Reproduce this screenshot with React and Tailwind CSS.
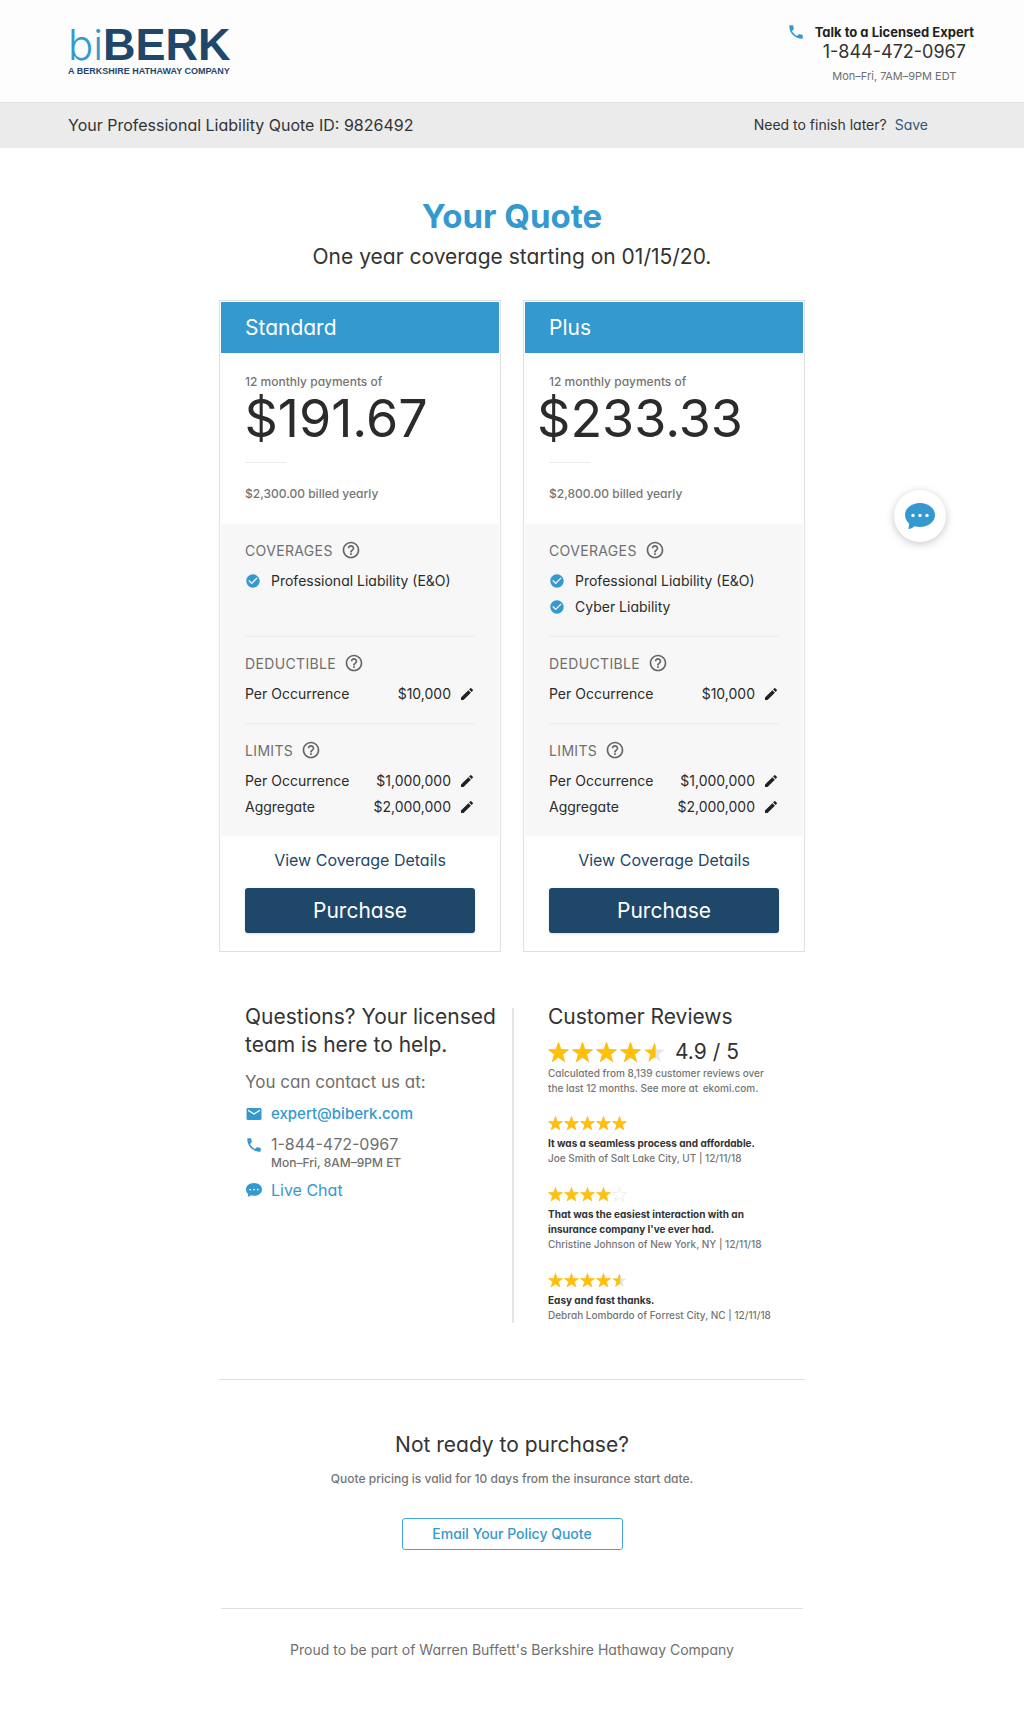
import { MdCheckCircle, MdEdit, MdEmail, MdHelpOutline, MdPhone } from 'react-icons/md'

const plans = [
  {
    name: 'Standard',
    monthly: '$191.67',
    yearly: '$2,300.00',
    coverages: ['Professional Liability (E&O)'],
  },
  {
    name: 'Plus',
    monthly: '$233.33',
    yearly: '$2,800.00',
    coverages: ['Professional Liability (E&O)', 'Cyber Liability'],
  },
]

const reviews = [
  { rating: 5, text: 'It was a seamless process and affordable.', author: 'Joe Smith of Salt Lake City, UT | 12/11/18' },
  { rating: 4, text: "That was the easiest interaction with an insurance company I've ever had.", author: 'Christine Johnson of New York, NY | 12/11/18' },
  { rating: 4.5, text: 'Easy and fast thanks.', author: 'Debrah Lombardo of Forrest City, NC | 12/11/18' },
]

const STAR = 'M10 0.5 12.4 7.2 19.5 7.4 13.9 11.8 15.9 18.7 10 14.6 4.1 18.7 6.1 11.8 0.5 7.4 7.6 7.2Z'

function Star({ fill, className }) {
  return (
    <svg viewBox="0 0 20 20" className={className} aria-hidden="true">
      {fill === 0 && <path d={STAR} fill="#fff" stroke="#e3e3e3" strokeWidth="0.8" />}
      {fill === 0.5 && (
        <>
          <path d={STAR} fill="#e6e6e6" />
          <path d="M11 3.3V15.3L10 14.6 4.1 18.7 6.1 11.8 0.5 7.4 7.6 7.2 10 0.5Z" fill="#ffc107" />
        </>
      )}
      {fill === 1 && <path d={STAR} fill="#ffc107" stroke="#f5b921" strokeWidth="0.8" />}
    </svg>
  )
}

function Stars({ rating, large }) {
  return (
    <div className={large ? 'flex gap-[3px]' : 'flex gap-px'} role="img" aria-label={`${rating} stars`}>
      {[1, 2, 3, 4, 5].map((n) => (
        <Star
          key={n}
          fill={rating >= n ? 1 : rating >= n - 0.5 ? 0.5 : 0}
          className={large ? 'size-[21px]' : 'size-[15px]'}
        />
      ))}
    </div>
  )
}

function ChatIcon({ className }) {
  return (
    <svg viewBox="0 0 30 26" className={className} aria-hidden="true">
      <path
        d="M15 0C23.3 0 30 5.2 30 12S23.3 24 15 24c-2 0-3.9-.3-5.6-.8C8 24.6 6 25.7 3.3 26c.6-1.5.8-3.7.6-5.7C1.5 18.2 0 15.2 0 12 0 5.2 6.7 0 15 0Z"
        fill="currentColor"
      />
      <circle cx="8" cy="12.4" r="1.7" fill="#fff" />
      <circle cx="15" cy="12.4" r="1.7" fill="#fff" />
      <circle cx="22" cy="12.4" r="1.7" fill="#fff" />
    </svg>
  )
}

function Logo() {
  return (
    <a href="#" className="block pt-[5px] font-['Liberation_Sans',sans-serif] text-[#1f476a]">
      <span className="flex items-baseline text-[45px] leading-[36px]">
        <span className="font-['Inter',sans-serif] text-[42px] font-light text-[#3399cf]">bi</span>
        <span className="font-bold">BERK</span>
      </span>
      <span className="block text-[9px] leading-4 font-bold whitespace-nowrap">A BERKSHIRE HATHAWAY COMPANY</span>
    </a>
  )
}

function SectionTitle({ children }) {
  return (
    <div className="flex h-6 items-center gap-2">
      <h3 className="pt-0.5 text-sm tracking-wide text-[#6f6f6f]">{children}</h3>
      <button type="button" aria-label={`About ${children.toLowerCase()}`} className="text-[#666]">
        <MdHelpOutline className="size-5" />
      </button>
    </div>
  )
}

function AmountRow({ label, amount }) {
  return (
    <div className="flex h-[26px] items-center text-sm text-[#2b2b2b]">
      <span>{label}</span>
      <span className="ml-auto">{amount}</span>
      <button type="button" aria-label={`Edit ${label.toLowerCase()}`} className="ml-2 text-[#222]">
        <MdEdit className="size-4" />
      </button>
    </div>
  )
}

function PlanCard({ plan }) {
  return (
    <article className="flex flex-1 flex-col border border-[#e0e0e0] bg-white p-px">
      <h2 className="bg-[#3399cf] px-6 py-3 text-[21px] leading-[27px] text-white">{plan.name}</h2>
      <div className="px-6 pt-[19px] pb-[18px]">
        <p className="text-xs leading-5 font-medium text-[#757575]">12 monthly payments of</p>
        <p className="flex w-[182px] justify-center text-[52px] leading-[54px] text-[#2b2b2b]">{plan.monthly}</p>
        <hr className="mt-4 w-[41px] border-[#ebebeb]" />
        <p className="mt-[19px] text-xs leading-6 font-medium text-[#757575]">{plan.yearly} billed yearly</p>
      </div>
      <div className="bg-[#f7f7f7] px-6 pt-3.5">
        <SectionTitle>COVERAGES</SectionTitle>
        <ul className="mt-1.5 h-[69px] border-b border-[#ebebeb]">
          {plan.coverages.map((c) => (
            <li key={c} className="flex h-[26px] items-center gap-2.5 text-sm text-[#2b2b2b]">
              <MdCheckCircle className="size-4 text-[#3399cf]" />
              {c}
            </li>
          ))}
        </ul>
        <div className="border-b border-[#ebebeb] pt-3.5 pb-4">
          <SectionTitle>DEDUCTIBLE</SectionTitle>
          <div className="mt-1.5">
            <AmountRow label="Per Occurrence" amount="$10,000" />
          </div>
        </div>
        <div className="pt-3.5 pb-4">
          <SectionTitle>LIMITS</SectionTitle>
          <div className="mt-1.5">
            <AmountRow label="Per Occurrence" amount="$1,000,000" />
            <AmountRow label="Aggregate" amount="$2,000,000" />
          </div>
        </div>
      </div>
      <div className="flex flex-col px-6 pt-3 pb-[17px]">
        <a href="#" className="text-center text-base leading-6 text-[#1f476a]">
          View Coverage Details
        </a>
        <button type="button" className="mt-4 h-[45px] rounded-[3px] bg-[#1f476a] text-[21px] text-white shadow-sm">
          Purchase
        </button>
      </div>
    </article>
  )
}

export default function App() {
  return (
    <div className="bg-white font-['Inter',sans-serif] text-[#333] [font-feature-settings:'cv11']">
      <header className="flex items-start justify-between border-b border-[#e3e3e3] bg-[#fdfdfd] pt-[22px] pr-[50px] pb-4 pl-[68px]">
        <Logo />
        <div className="flex gap-2.5">
          <MdPhone className="mt-px size-[18px] text-[#3399cf]" />
          <div className="text-center">
            <p className="text-[13px] leading-5 font-bold text-[#222]">Talk to a Licensed Expert</p>
            <p className="text-lg leading-5">1-844-472-0967</p>
            <p className="mt-1 text-[11px] leading-5 text-[#6f6f6f]">Mon–Fri, 7AM–9PM EDT</p>
          </div>
        </div>
      </header>
      <div className="flex h-[45px] items-center justify-between bg-[#ebebeb] pr-24 pb-0.5 pl-[68px]">
        <h1 className="text-base">Your Professional Liability Quote ID: 9826492</h1>
        <p className="flex gap-2 text-sm">
          Need to finish later?
          <a href="#" className="text-[#2d5a82]">Save</a>
        </p>
      </div>

      <main className="mx-auto max-w-[586px]">
        <div className="pt-12 text-center">
          <h2 className="text-[33px] leading-10 font-bold text-[#3399cf]">Your Quote</h2>
          <p className="mt-[3px] text-[21px] leading-9">One year coverage starting on 01/15/20.</p>
        </div>

        <div className="mt-[25px] flex gap-[22px]">
          {plans.map((p) => (
            <PlanCard key={p.name} plan={p} />
          ))}
        </div>

        <div className="mt-14 grid grid-cols-2">
          <section className="pl-[26px]">
            <h2 className="-mt-[5px] text-[21px] leading-7 whitespace-nowrap">
              Questions? Your licensed
              <br />
              team is here to help.
            </h2>
            <p className="mt-[11px] text-[17px] leading-6 text-[#6f6f6f]">You can contact us at:</p>
            <ul className="mt-2 text-base">
              <li className="flex h-6 items-center gap-2 text-[#3399cf]">
                <MdEmail className="size-[18px]" />
                <a href="mailto:expert@biberk.com" className="text-[15px] font-medium">expert@biberk.com</a>
              </li>
              <li className="mt-2 flex gap-2 text-[#6f6f6f]">
                <MdPhone className="mt-0.5 size-[18px] text-[#3399cf]" />
                <div>
                  <p className="leading-5">1-844-472-0967</p>
                  <p className="text-xs leading-[18px] font-medium">Mon–Fri, 8AM–9PM ET</p>
                </div>
              </li>
              <li className="mt-1.5 flex h-6 items-center gap-2 text-[#3399cf]">
                <ChatIcon className="w-[18px] px-px" />
                <button type="button" className="text-base">Live Chat</button>
              </li>
            </ul>
          </section>

          <section className="border-l-2 border-[#e5e5e5] pl-[34px]">
            <h2 className="-mt-[5px] text-[21px] leading-7">Customer Reviews</h2>
            <div className="mt-[7px] flex items-center gap-2.5">
              <Stars rating={4.5} large />
              <span className="text-[21px] leading-7">4.9 / 5</span>
            </div>
            <p className="w-[230px] text-[10px] leading-[15px] font-medium text-[#757575]">
              Calculated from 8,139 customer reviews over the last 12 months. See more at{' '}
              <a href="#" className="ml-0.5">ekomi.com.</a>
            </p>
            <div className="mt-5 flex flex-col gap-[21px]">
              {reviews.map((r) => (
                <div key={r.author} className="text-[10px] leading-[15px]">
                  <Stars rating={r.rating} />
                  <p className="mt-[5px] w-[216px] font-bold">{r.text}</p>
                  <p className="font-medium whitespace-nowrap text-[#757575]">{r.author}</p>
                </div>
              ))}
            </div>
          </section>
        </div>

        <section className="mt-14 border-t border-[#e0e0e0] pt-[49px] text-center">
          <h2 className="text-[21px] leading-8">Not ready to purchase?</h2>
          <p className="mt-2 text-xs leading-5 font-medium text-[#757575]">
            Quote pricing is valid for 10 days from the insurance start date.
          </p>
          <button
            type="button"
            className="mt-[29px] h-8 w-[221px] rounded-[3px] border border-[#43a6da] text-sm font-medium text-[#3399cf]"
          >
            Email Your Policy Quote
          </button>
        </section>
        <footer className="mx-0.5 mt-[58px] border-t border-[#e0e0e0] pt-[31px] pb-14 text-center text-sm leading-5 text-[#6f6f6f]">
          Proud to be part of Warren Buffett's Berkshire Hathaway Company
        </footer>
      </main>

      <button
        type="button"
        aria-label="Open chat"
        className="fixed top-[490px] right-[78px] flex size-[52px] items-center justify-center rounded-full bg-white text-[#3399cf] shadow-[0_2px_8px_rgba(0,0,0,0.22)]"
      >
        <ChatIcon className="w-[30px]" />
      </button>
    </div>
  )
}
